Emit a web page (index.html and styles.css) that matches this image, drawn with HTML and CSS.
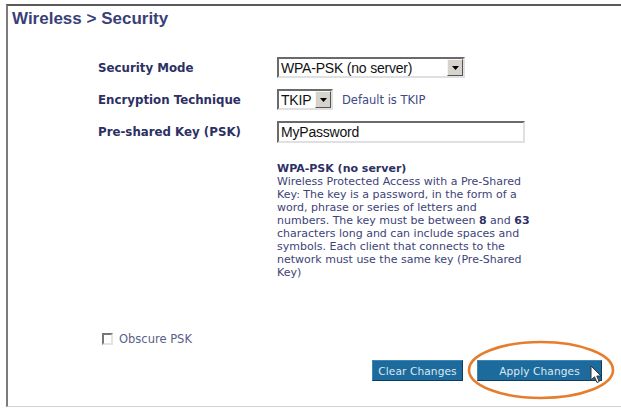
FILE: index.html
```html
<!DOCTYPE html>
<html>
<head>
<meta charset="utf-8">
<link rel="stylesheet" href="styles.css">
</head>
<body>
<div class="frame">
  <h1 class="title">Wireless &gt; Security</h1>
  <div class="form">
    <div class="label">Security Mode</div>
    <div class="ctl">
      <div class="select sel-mode"><span class="val">WPA-PSK (no server)</span><span class="arrow"><svg width="7" height="4" viewBox="0 0 7 4"><path d="M0 0H7L3.5 4Z" fill="#000"/></svg></span></div>
    </div>
    <div class="label">Encryption Technique</div>
    <div class="ctl">
      <div class="select sel-tkip"><span class="val">TKIP</span><span class="arrow"><svg width="7" height="4" viewBox="0 0 7 4"><path d="M0 0H7L3.5 4Z" fill="#000"/></svg></span></div>
      <span class="hint">Default is TKIP</span>
    </div>
    <div class="label">Pre-shared Key (PSK)</div>
    <div class="ctl">
      <div class="input">MyPassword</div>
    </div>
    <div class="desc">
      <b>WPA-PSK (no server)</b><br>
      Wireless Protected Access with a Pre-Shared<br>
      Key: The key is a password, in the form of a<br>
      word, phrase or series of letters and<br>
      numbers. The key must be between <b>8</b> and <b>63</b><br>
      characters long and can include spaces and<br>
      symbols. Each client that connects to the<br>
      network must use the same key (Pre-Shared<br>
      Key)
    </div>
  </div>
  <div class="obscure"><span class="box"></span><span>Obscure PSK</span></div>
  <div class="buttons">
    <button class="btn clear">Clear Changes</button>
    <button class="btn apply">Apply Changes</button>
  </div>
  <svg class="ring" width="150" height="62" viewBox="0 0 150 62"><ellipse cx="75" cy="31" rx="72" ry="28" fill="none" stroke="#e57d2c" stroke-width="2.6"/></svg>
  <svg class="cursor" width="13" height="19" viewBox="0 0 13 19"><path d="M1 1L1 15L4.5 11.8L7 17.5L9.2 16.6L6.8 11H11Z" fill="#fff" stroke="#333" stroke-width="1" stroke-linejoin="round"/></svg>
</div>
</body>
</html>
```

FILE: styles.css
```css
html, body {
  margin: 0;
  padding: 0;
  background: #fff;
}
body {
  width: 621px;
  height: 409px;
  overflow: hidden;
  font-family: "DejaVu Sans", Verdana, sans-serif;
}
.frame {
  position: relative;
  box-sizing: border-box;
  margin: 4px 0 0 6px;
  height: 403px;
  border-top: 2px solid #5a5a5a;
  border-left: 2px solid #7c7c7c;
  border-bottom: 1px solid #d2d2d2;
}
.title {
  margin: 0;
  padding: 4px 0 0 4px;
  font-family: "Liberation Sans", Arial, sans-serif;
  font-weight: bold;
  font-size: 17px;
  line-height: 18px;
  color: #3b3f78;
}
.form {
  margin-top: 29px;
  padding-left: 90px;
  display: grid;
  grid-template-columns: 179px 260px;
  grid-template-rows: 21px 21px 22px auto;
  row-gap: 11px;
  align-items: center;
}
.label {
  font-weight: bold;
  font-size: 11.8px;
  color: #2c3064;
}
.ctl {
  display: flex;
  align-items: center;
  height: 100%;
}
.select, .input {
  box-sizing: border-box;
  height: 100%;
  display: flex;
  align-items: center;
  background: #fff;
  border: 2px solid;
  border-color: #6a6a6a #e0e0e0 #e0e0e0 #6a6a6a;
  font-family: "Liberation Sans", Arial, sans-serif;
  font-size: 14px;
  color: #111;
  letter-spacing: -0.2px;
}
.val {
  flex: 1;
  padding-left: 2px;
  white-space: nowrap;
  overflow: hidden;
}
.sel-mode {
  width: 188px;
}
.sel-tkip {
  width: 56px;
}
.arrow {
  box-sizing: border-box;
  flex: none;
  width: 16px;
  height: 100%;
  display: flex;
  align-items: center;
  justify-content: center;
  background: #d6d3cc;
  border: 1px solid;
  border-color: #f4f4f4 #555 #555 #f4f4f4;
}
.hint {
  margin-left: 9px;
  font-size: 11.5px;
  color: #3d4a86;
}
.input {
  width: 248px;
  padding-left: 2px;
}
.desc {
  grid-column: 2;
  margin-top: 8px;
  font-size: 11px;
  line-height: 13px;
  color: #3d4378;
  white-space: nowrap;
}
.desc b {
  color: #2c3064;
}
.obscure {
  margin: 54px 0 0 94px;
  height: 12px;
  display: flex;
  align-items: center;
  font-size: 11.5px;
  color: #59608a;
}
.box {
  box-sizing: border-box;
  width: 11px;
  height: 12px;
  margin-right: 6px;
  border: 2px solid;
  border-color: #777 #e4e4e4 #e4e4e4 #777;
  background: #fff;
}
.buttons {
  margin: 15px 0 0 364px;
  display: flex;
  gap: 14px;
}
.btn {
  box-sizing: border-box;
  height: 21px;
  padding: 0;
  border: 1px solid #0e3c5e;
  border-top-color: #3f86b6;
  border-left-color: #3f86b6;
  background: #1d6a9c;
  color: #dbe8f2;
  font-family: "DejaVu Sans", Verdana, sans-serif;
  font-size: 10.6px;
  letter-spacing: 0.1px;
  white-space: nowrap;
}
.clear {
  width: 91px;
}
.apply {
  width: 125px;
}
.ring {
  position: absolute;
  left: 458px;
  top: 333px;
}
.cursor {
  position: absolute;
  left: 582px;
  top: 359px;
}
```
